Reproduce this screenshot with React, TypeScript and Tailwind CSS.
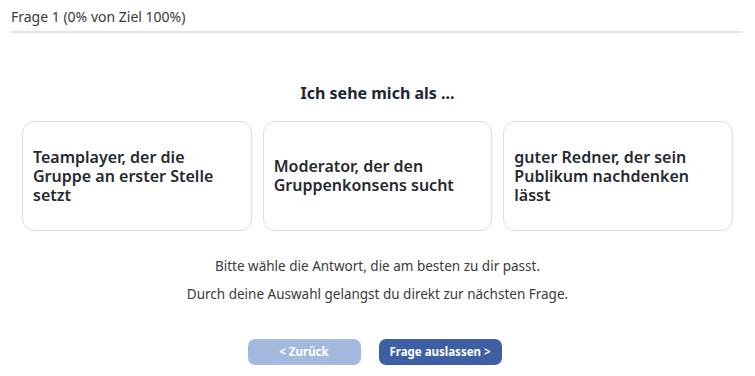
const options = [
  "Teamplayer, der die Gruppe an erster Stelle setzt",
  "Moderator, der den Gruppenkonsens sucht",
  "guter Redner, der sein Publikum nachdenken lässt",
];

export default function App() {
  return (
    <div className="w-[755px] h-[376px] bg-white font-['Noto_Sans',sans-serif] overflow-hidden">
      {/* Progress */}
      <div className="pl-[11px] pr-[13px] pt-[7px]">
        <div className="text-[14px] leading-[19px] text-[#3a3a3a]">Frage 1 (0% von Ziel 100%)</div>
        <div className="mt-[5px] h-[2px] bg-[#e3e5e8]" />
      </div>

      {/* Question */}
      <h1 className="mt-[49px] text-center text-[16px] leading-[22px] font-bold text-[#1d2533]">
        Ich sehe mich als ...
      </h1>

      <div className="mx-auto mt-[17px] w-[711px] grid grid-cols-3 gap-[11px]">
        {options.map((o) => (
          <button
            key={o}
            className="h-[110px] rounded-[12px] border border-[#dedede] bg-white px-[10px] text-left flex items-center"
          >
            <span className="text-[16px] leading-[19px] font-semibold text-[#262a30] pr-[20px]">{o}</span>
          </button>
        ))}
      </div>

      {/* Hints */}
      <div className="mt-[21px] text-center text-[13.5px] leading-[28px] text-[#3b3b3b]">
        <p>Bitte wähle die Antwort, die am besten zu dir passt.</p>
        <p>Durch deine Auswahl gelangst du direkt zur nächsten Frage.</p>
      </div>

      {/* Nav */}
      <div className="mt-[31px] flex justify-center gap-[18px] pr-[6px]">
        <button className="w-[113px] h-[26px] rounded-[7px] bg-[#a4b9de] text-white text-[11.5px] font-bold">
          &lt; Zurück
        </button>
        <button className="w-[123px] h-[26px] rounded-[7px] bg-[#3e5fa3] text-white text-[11.5px] font-bold">
          Frage auslassen &gt;
        </button>
      </div>
    </div>
  );
}
